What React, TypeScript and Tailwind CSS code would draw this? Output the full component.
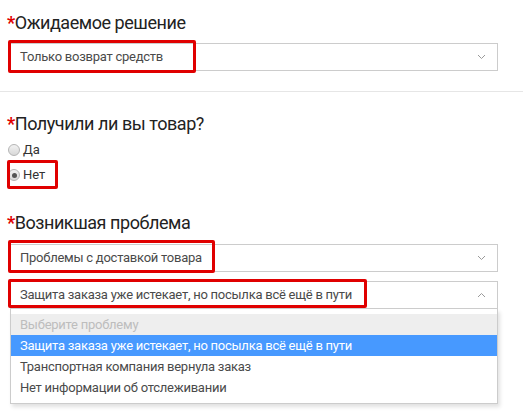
import React from 'react';

const Chevron: React.FC<{ up?: boolean }> = ({ up }) => (
  <svg width="9" height="6" viewBox="0 0 9 6" className="text-[#9a9a9a]">
    <path d={up ? 'M1 5 L4.5 1.5 L8 5' : 'M1 1 L4.5 4.5 L8 1'} fill="none" stroke="currentColor" strokeWidth="1" />
  </svg>
);

const Mark: React.FC<{ className: string }> = ({ className }) => (
  <div className={`absolute border-[3px] border-[#e00000] rounded-[2px] pointer-events-none ${className}`} />
);

const Title: React.FC<{ text: string; className?: string }> = ({ text, className = '' }) => (
  <div className={`pl-[7px] text-[18px] leading-[24px] tracking-[-0.45px] text-[#222] ${className}`}>
    <span className="text-[#e00000] font-bold">*</span>
    {text}
  </div>
);

const Select: React.FC<{ value: string; up?: boolean; mark: string; className?: string }> = ({ value, up, mark, className = '' }) => (
  <div className={`relative ml-[10px] w-[488px] h-[28px] border border-[#cccccc] flex items-center justify-between pl-[9px] pr-[11px] text-[13px] tracking-[-0.25px] text-[#4a4a4a] ${className}`}>
    <span>{value}</span>
    <Chevron up={up} />
    <Mark className={mark} />
  </div>
);

const Radio: React.FC<{ label: string; checked?: boolean }> = ({ label, checked }) => (
  <div className="flex items-center gap-[3px] h-[18px] text-[13px] text-[#333]">
    <span className="w-[12px] h-[12px] rounded-full border border-[#b5b5b5] bg-gradient-to-b from-[#f2f2f2] to-[#d8d8d8] flex items-center justify-center">
      {checked && <span className="w-[5px] h-[5px] rounded-full bg-[#555]" />}
    </span>
    <span>{label}</span>
  </div>
);

const options = [
  'Защита заказа уже истекает, но посылка всё ещё в пути',
  'Транспортная компания вернула заказ',
  'Нет информации об отслеживании',
];

export default function App() {
  return (
    <div className="w-[523px] h-[411px] bg-white overflow-hidden" style={{ fontFamily: 'Roboto, "Liberation Sans", sans-serif' }}>
      <div className="pt-[11px]">
        <Title text="Ожидаемое решение" />
        <Select value="Только возврат средств" mark="left-[-3px] top-[-4px] w-[188px] h-[33px]" className="mt-[8px]" />
      </div>
      <div className="mt-[20px] border-t border-[#e6e6e6]" />

      <div className="pt-[20px]">
        <Title text="Получили ли вы товар?" />
        <div className="pl-[8px] mt-[5px] flex flex-col gap-[7px]">
          <Radio label="Да" />
          <div className="relative">
            <Radio label="Нет" checked />
            <Mark className="left-[-1px] top-[-6px] w-[51px] h-[29px]" />
          </div>
        </div>
      </div>

      <div className="pt-[27px]">
        <Title text="Возникшая проблема" />
        <Select value="Проблемы с доставкой товара" mark="left-[-3px] top-[-5px] w-[207px] h-[33px]" className="mt-[9px]" />
        <Select value="Защита заказа уже истекает, но посылка всё ещё в пути" up mark="left-[-3px] top-[-3px] w-[359px] h-[29px]" className="mt-[9px]" />
        <div className="ml-[10px] w-[488px] border-x border-b border-[#cccccc] bg-white shadow-[2px_3px_4px_rgba(0,0,0,0.12)] pt-[5px] pb-[5px] text-[13px] tracking-[-0.25px]">
          <div className="h-[21px] leading-[21px] px-[9px] bg-[#eeeeee] text-[#bdbdbd]">Выберите проблему</div>
          {options.map((o, i) => (
            <div key={o} className={`h-[21px] leading-[21px] px-[9px] ${i === 0 ? 'bg-[#4799ff] text-white' : 'text-[#4a4a4a]'}`}>
              {o}
            </div>
          ))}
        </div>
      </div>
    </div>
  );
}
